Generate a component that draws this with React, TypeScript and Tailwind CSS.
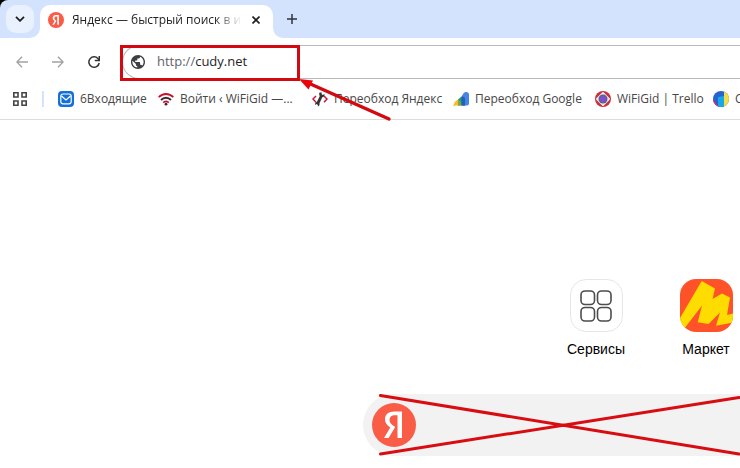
import type { ReactNode } from 'react';

function YandexLogo({ className }: { className: string }) {
  return (
    <svg viewBox="0 0 44 44" className={className} aria-hidden="true">
      <circle cx="22" cy="22" r="22" fill="#f95d48" />
      <path
        d="M25.500 35V12.300h-2.500c-3.700 0-5.400 1.800-5.400 4.600 0 2.500 1.100 3.900 3.400 5.500l2.200 1.500L16.600 35H12l6.300-10.400c-3.500-2.500-5.300-4.700-5.300-8.300C13 11.500 16.500 8.500 22.600 8.500H30V35z"
        fill="#fff"
      />
    </svg>
  );
}

function MailIcon() {
  return (
    <svg viewBox="0 0 16 16" className="size-4 shrink-0" aria-hidden="true">
      <rect width="16" height="16" rx="4" fill="#1470d8" />
      <rect x="2.800" y="3" width="10.400" height="9.800" rx="2.200" fill="none" stroke="#fff" strokeWidth="1.200" />
      <path d="M3.500 5l4.500 4 4.500-4" fill="none" stroke="#fff" strokeWidth="1.300" />
    </svg>
  );
}

function WifiIcon() {
  return (
    <svg viewBox="0 0 16 16" className="size-4 shrink-0" aria-hidden="true">
      <g fill="none" strokeWidth="1.800">
        <path d="M.7 6.200C4.800 1.900 11.200 1.900 15.300 6.200" stroke="#c8102e" />
        <path d="M3 9c2.900-3 7.100-3 10 0" stroke="#3b2a2f" />
        <path d="M5.200 11.600c1.700-1.700 3.900-1.700 5.600 0" stroke="#c8102e" />
      </g>
      <circle cx="8" cy="13.200" r="1.400" fill="#3b2a2f" />
    </svg>
  );
}

function WrenchCodeIcon() {
  return (
    <svg viewBox="0 0 16 16" className="size-4 shrink-0" aria-hidden="true">
      <path d="M4 5L1 8l3 3.200M12 5l3 3-3 3.200" fill="none" stroke="#d0143c" strokeWidth="1.500" />
      <path
        d="M7.500 1.500c-.6 1.500-.3 2.600.3 3.400L5 10.800c-1.300.3-2.100 1.600-1.900 3.200l1.500-.9 1.300.8-.1 1.600c1.500-.5 2.100-1.900 1.700-3.300l2.800-5.900c1.500-.2 2.300-1.400 2.300-3.300l-1.700 1-1.300-.7.100-1.900c-.900 0-1.700.1-2.200.1z"
        fill="#333"
      />
    </svg>
  );
}

function AdsIcon() {
  return (
    <svg viewBox="0 0 16 16" className="size-4 shrink-0" aria-hidden="true">
      <path d="M9 4.500L11 1.800A3 3 0 0 1 16 3V12.500a2 2 0 0 1-2 2H9z" fill="#4684e8" />
      <path d="M5 8.500L8.500 5.500 12 7v7.500H5z" fill="#1d9a80" />
      <path d="M8.500 5.500A3 3 0 0 1 12 7.500v7H8.500z" fill="#245fba" />
      <path d="M0 15.500l2-4.800 3-2.200 2.500 2.800v2.200a2 2 0 0 1-2 1H2z" fill="#f8bb20" />
      <path d="M5 8.500l3 2.200v3.800H5z" fill="#7fa53f" />
    </svg>
  );
}

function TargetIcon() {
  return (
    <svg viewBox="0 0 16 16" className="size-4 shrink-0" aria-hidden="true">
      <circle cx="8" cy="8" r="8" fill="#c92f3a" />
      <path d="M8 2L14 8 8 14 2 8z" fill="#e8e8ee" stroke="#e8e8ee" strokeWidth="2" strokeLinejoin="round" />
      <circle cx="8" cy="8" r="4.500" fill="#56658a" />
      <circle cx="8" cy="8" r="3.200" fill="#7951ca" />
    </svg>
  );
}

function ColorDiscIcon() {
  return (
    <svg viewBox="0 0 16 16" className="size-4 shrink-0" aria-hidden="true">
      <defs>
        <clipPath id="disc">
          <circle cx="8" cy="8" r="8" />
        </clipPath>
      </defs>
      <g clipPath="url(#disc)">
        <rect width="16" height="16" fill="#2563cf" />
        <path d="M11 0h5v16h-5z" fill="#f4dc4b" />
        <path d="M0 8l6 8H0z" fill="#d6247c" />
        <path d="M5 6l6-1v11H5z" fill="#16a9e8" />
      </g>
    </svg>
  );
}

function GridIcon() {
  return (
    <svg viewBox="0 0 14 14" className="size-3.5" fill="none" stroke="#444746" strokeWidth="1.600" aria-hidden="true">
      <path d="M.8.8h4.200v4.200H.8zM9 .8h4.200v4.200H9zM.8 9h4.200v4.200H.8zM9 9h4.200v4.200H9z" />
    </svg>
  );
}

function MarketIcon() {
  return (
    <svg viewBox="0 0 53 53" className="size-[53px]" aria-hidden="true">
      <defs>
        <clipPath id="market">
          <rect width="53" height="53" rx="16" />
        </clipPath>
      </defs>
      <g clipPath="url(#market)">
        <rect width="53" height="53" fill="#ff5229" />
        <path
          d="M0 39L21.700 2 35 9.500 32.500 20 42 14.500 50 18.500 47 36 53 34.500V43.500L36 46.700 40 33.500 28.500 45 17.700 43.300 22 26.500 4 50 0 49z"
          fill="#ffdc00"
        />
      </g>
    </svg>
  );
}

const bookmarks: { title: string; icon: ReactNode; spacing: string }[] = [
  { title: '6Входящие', icon: <MailIcon />, spacing: 'w-[100px]' },
  { title: 'Войти ‹ WiFiGid —...', icon: <WifiIcon />, spacing: 'w-[154px]' },
  { title: 'Переобход Яндекс', icon: <WrenchCodeIcon />, spacing: 'w-[141px]' },
  { title: 'Переобход Google', icon: <AdsIcon />, spacing: 'w-[142px]' },
  { title: 'WiFiGid | Trello', icon: <TargetIcon />, spacing: 'w-[118px]' },
  { title: 'C', icon: <ColorDiscIcon />, spacing: 'w-[80px]' },
];

function TabStrip() {
  return (
    <div className="bg-black">
      <div className="flex h-[38px] items-start rounded-tl-lg bg-[#d3e3fd] pt-[5px] pl-[6px]">
        <button type="button" aria-label="Поиск вкладок" className="flex size-7 items-center justify-center rounded-[10px] bg-[#e9f1fe]">
          <svg viewBox="0 0 10 6" className="h-1.5 w-2.5" fill="none" stroke="#1f1f1f" strokeWidth="1.800" aria-hidden="true">
            <path d="M1 .8l4 4 4-4" />
          </svg>
        </button>
        <div className="relative ml-[6px] flex h-[33px] w-[233px] items-center rounded-t-[10px] bg-white pr-[9px] pb-[4px] pl-2">
          <svg viewBox="0 0 10 10" className="absolute bottom-0 -left-2.5 size-2.5" aria-hidden="true">
            <path d="M10 0v10H0A10 10 0 0 0 10 0z" fill="#fff" />
          </svg>
          <svg viewBox="0 0 10 10" className="absolute -right-2.5 bottom-0 size-2.5" aria-hidden="true">
            <path d="M0 0v10h10A10 10 0 0 1 0 0z" fill="#fff" />
          </svg>
          <YandexLogo className="size-4 shrink-0" />
          <span className="ml-2 w-[170px] overflow-hidden text-xs whitespace-nowrap text-[#1f1f1f] [mask-image:linear-gradient(to_right,#000_84%,transparent)]">
            Яндекс — быстрый поиск в ин
          </span>
          <button type="button" aria-label="Закрыть" className="ml-auto flex size-4 items-center justify-center">
            <svg viewBox="0 0 8 8" className="size-2" stroke="#1f1f1f" strokeWidth="1.600" aria-hidden="true">
              <path d="M.5.5l7 7M7.500.5l-7 7" />
            </svg>
          </button>
        </div>
        <button type="button" aria-label="Новая вкладка" className="ml-[5px] flex size-7 items-center justify-center">
          <svg viewBox="0 0 10 10" className="size-2.5" stroke="#30353d" strokeWidth="1.500" aria-hidden="true">
            <path d="M5 0v10M0 5h10" />
          </svg>
        </button>
      </div>
    </div>
  );
}

function Toolbar() {
  return (
    <div className="flex h-[48px] items-center">
      <div className="flex w-[122px] shrink-0 gap-2 pl-2">
        <button type="button" aria-label="Назад" className="flex size-7 items-center justify-center">
          <svg viewBox="0 0 12 12" className="size-3" fill="none" stroke="#a3a3a3" strokeWidth="1.400" aria-hidden="true">
            <path d="M12 6H1M6 .8L.9 6 6 11.200" />
          </svg>
        </button>
        <button type="button" aria-label="Вперёд" className="flex size-7 items-center justify-center">
          <svg viewBox="0 0 12 12" className="size-3" fill="none" stroke="#a3a3a3" strokeWidth="1.400" aria-hidden="true">
            <path d="M0 6h11M6 .8L11.100 6 6 11.200" />
          </svg>
        </button>
        <button type="button" aria-label="Обновить" className="flex size-7 items-center justify-center">
          <svg viewBox="0 0 12 12" className="size-3" fill="none" stroke="#333" strokeWidth="1.500" aria-hidden="true">
            <path d="M11.200 7A5.200 5.200 0 1 1 9.900 2.500L11.200 4" />
            <path d="M11.300 0v4.600H6.800" />
          </svg>
        </button>
      </div>
      <div className="relative flex h-[34px] min-w-0 flex-1 items-center rounded-l-full border border-r-0 border-[#b9b9b9] pl-2">
        <svg viewBox="2 2 20 20" className="size-3.5 shrink-0" fill="#3c4043" aria-hidden="true">
          <path d="M12 2C6.480 2 2 6.480 2 12s4.480 10 10 10 10-4.480 10-10S17.520 2 12 2zm-1 17.930c-3.950-.49-7-3.850-7-7.930 0-.62.08-1.210.21-1.790L9 15v1c0 1.100.9 2 2 2v1.930zm6.900-2.540c-.26-.81-1-1.390-1.900-1.390h-1v-3c0-.55-.45-1-1-1H8v-2h2c.55 0 1-.45 1-1V7h2c1.100 0 2-.9 2-2v-.41c2.930 1.190 5 4.060 5 7.410 0 2.080-.8 3.970-2.100 5.390z" />
        </svg>
        <label htmlFor="address" className="ml-3 text-[13px] text-[#5f6368]">
          http://
        </label>
        <input id="address" type="text" defaultValue="cudy.net" className="min-w-0 flex-1 bg-transparent text-[13px] text-[#1f1f1f] outline-none" />
        <div className="pointer-events-none absolute -top-px -left-[3px] h-9 w-[180px] border-3 border-[#d20a10]" />
        <svg viewBox="0 0 94 44" className="pointer-events-none absolute top-8 left-[175px] z-10 h-11 w-[94px]" aria-hidden="true">
          <path d="M8 4l83 37" stroke="#d20a10" strokeWidth="3.400" strokeLinecap="round" />
          <path d="M1 1l14 1.500-4.500 9z" fill="#e8060c" />
        </svg>
      </div>
    </div>
  );
}

function BookmarksBar() {
  return (
    <nav className="flex h-[34px] items-center overflow-hidden border-b border-[#dcdcdc] pb-2 pl-[13px]">
      <button type="button" aria-label="Приложения" className="shrink-0">
        <GridIcon />
      </button>
      <div className="mr-3.5 ml-[15px] h-4 w-0.5 shrink-0 bg-[#d3e3fd]" />
      {bookmarks.map((item) => (
        <a key={item.title} href="#" className={`flex shrink-0 items-center gap-1.5 text-xs whitespace-nowrap text-[#474747] ${item.spacing}`}>
          {item.icon}
          {item.title}
        </a>
      ))}
    </nav>
  );
}

export default function App() {
  return (
    <div className="min-h-screen overflow-hidden bg-white font-['Open_Sans','Noto_Sans',sans-serif]">
      <header>
        <TabStrip />
        <Toolbar />
        <BookmarksBar />
      </header>
      <main className="pt-[159px] font-['Liberation_Sans',sans-serif]">
        <div className="flex pl-[541px] text-sm text-black">
          <a href="#" className="flex w-[110px] shrink-0 flex-col items-center gap-[7px]">
            <span className="flex size-[53px] items-center justify-center rounded-2xl border border-[#e6e6e6]">
              <svg viewBox="0 0 32 32" className="size-8" fill="none" stroke="#4c4c4c" strokeWidth="1.600" aria-hidden="true">
                <rect x="1" y="1" width="13.500" height="13.500" rx="4" />
                <rect x="17.500" y="1" width="13.500" height="13.500" rx="4" />
                <rect x="1" y="17.500" width="13.500" height="13.500" rx="4" />
                <rect x="17.500" y="17.500" width="13.500" height="13.500" rx="4" />
              </svg>
            </span>
            Сервисы
          </a>
          <a href="#" className="flex w-[110px] shrink-0 flex-col items-center gap-[7px]">
            <MarketIcon />
            Маркет
          </a>
        </div>
        <form className="relative mt-[35px] ml-[363px] flex h-[62px] items-center rounded-l-full bg-[#f2f2f2] pl-[9px]">
          <YandexLogo className="size-11 shrink-0" />
          <input type="search" aria-label="Поиск" className="min-w-0 flex-1 bg-transparent px-4 outline-none" />
          <svg viewBox="0 0 361 62" preserveAspectRatio="none" className="pointer-events-none absolute top-0 right-0 left-4 h-full w-[calc(100%-16px)]" fill="none" stroke="#d80d12" strokeWidth="3" strokeLinecap="round" aria-hidden="true">
            <path d="M1.500 1.500L360 60M1.500 60L360 3.500" />
          </svg>
        </form>
      </main>
    </div>
  );
}
